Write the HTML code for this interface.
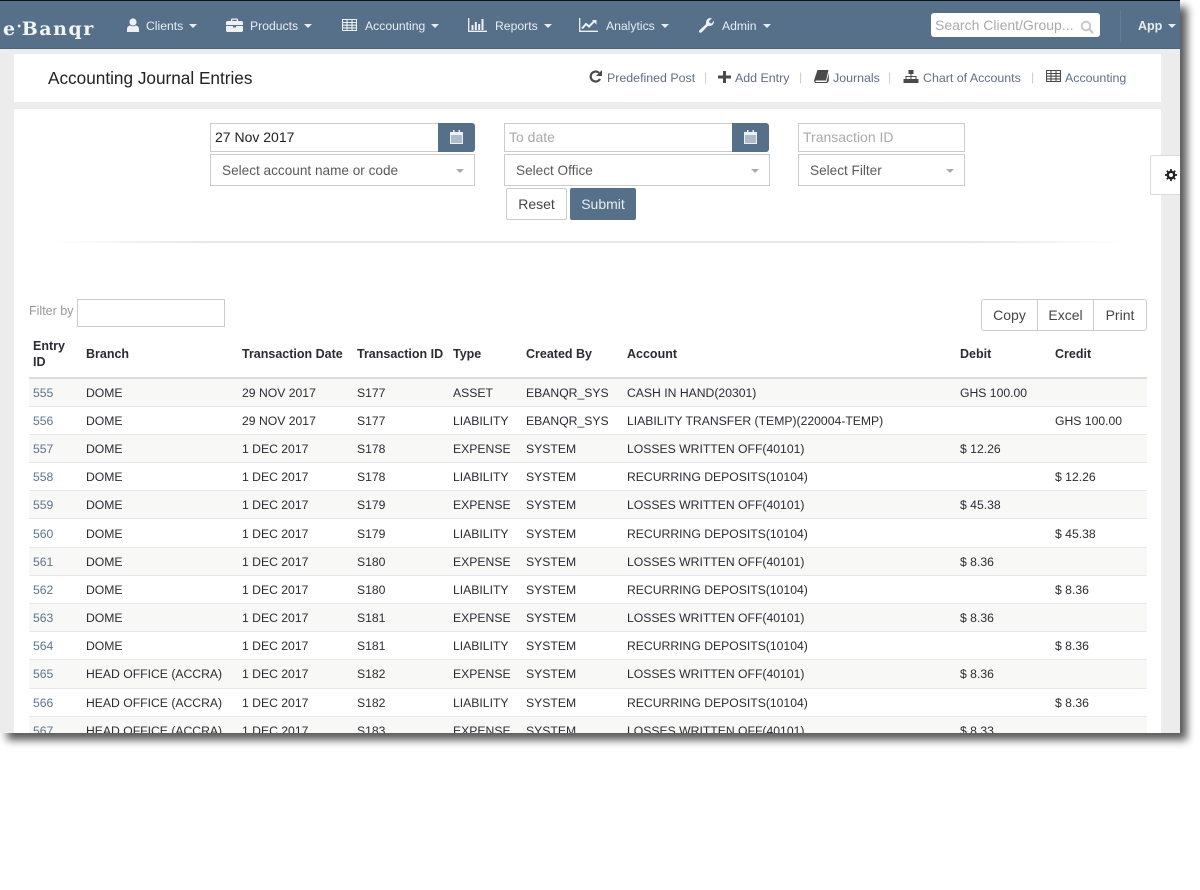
<!DOCTYPE html>
<html><head><meta charset="utf-8"><style>
*{box-sizing:border-box}
html,body{margin:0;padding:0;width:1200px;height:890px;overflow:hidden;background:#fff;font-family:"Liberation Sans",sans-serif}
#app{position:absolute;left:0;top:0;width:1180px;height:733px;background:#ececec;box-shadow:7px 7px 8px rgba(0,0,0,.65);overflow:hidden}
#nav{position:absolute;left:0;top:1px;width:1180px;height:48px;background:#56708a;border-bottom:1px solid #4d6479}
#top{position:absolute;left:0;top:0;width:1180px;height:1px;background:#111}
.a{position:absolute;white-space:nowrap}
.n{color:#e8edf2;font-size:12.2px;top:19px;line-height:14px}
.c{display:inline-block;width:0;height:0;border-left:4px solid transparent;border-right:4px solid transparent;border-top:4px solid #e8edf2;vertical-align:2px;margin-left:6px}
svg{position:absolute;display:block}
.l{color:#5d6f86;font-size:12.4px;top:71px;line-height:14px}
.s{color:#ccc;font-size:12px;top:71px;line-height:13px}
.in{border:1px solid #ccc;background:#fff;font-size:14px;line-height:26px;height:29px;padding-left:4px}
.sel{border:1px solid #ccc;background:#fff;font-size:13.6px;color:#5a5a5a;height:32px;line-height:32px;padding-left:11px}
.sel i{position:absolute;right:10px;top:14px;width:0;height:0;border-left:4px solid transparent;border-right:4px solid transparent;border-top:4px solid #aaa}
.cal{background:#56708a;border-radius:0 3px 3px 0;height:29px;width:37px}
.btn{border:1px solid #ccc;background:#fff;color:#444;font-size:14px;text-align:center;line-height:30px;height:32px}
table{position:absolute;left:29px;top:333px;width:1118px;border-collapse:collapse;table-layout:fixed;font-size:12.2px;color:#2b2b33;background:#fff}
th{font-size:12.5px;font-weight:bold;text-align:left;padding:0 4px 3px;height:45px;line-height:16px;border-bottom:2px solid #ddd;vertical-align:middle}
td{padding:1px 4px 0;height:28.2px;border-top:1px solid #e6e6ec;white-space:nowrap;overflow:visible}
tr:nth-child(odd) td{background:#f8f8f7}
tbody tr:first-child td{border-top:0}
td:first-child{color:#5d7490}
</style></head><body>
<div id="app">
<div id="top"></div>
<div id="nav"></div>
<div class="a" style="left:3px;top:15px;font:bold 19px/22px 'DejaVu Serif',serif;color:#f2f4f6;letter-spacing:1.5px">e<span style="font-size:8px;vertical-align:6px;letter-spacing:0">&#8226;</span>Banqr</div>

<svg style="left:127px;top:18px" width="12" height="15" viewBox="0 0 12 15"><circle cx="6" cy="4" r="3.6" fill="#eef1f4"/><path d="M0 14V11C0 8.5 2 7.500 3.500 7.500C4.500 8.500 7.500 8.500 8.500 7.500C10 7.500 12 8.500 12 11V14Z" fill="#eef1f4"/></svg>
<div class="a n" style="left:146px">Clients<span class="c"></span></div>
<svg style="left:226px;top:18px" width="17" height="14" viewBox="0 0 17 14"><path d="M1.500 3H5V1.500C5 .9 5.500.5 6 .5H11C11.500.5 12 .9 12 1.500V3H15.500C16.300 3 17 3.700 17 4.500V7H0V4.500C0 3.700.7 3 1.500 3ZM6.300 1.700V3H10.700V1.700ZM0 8H7V9.500H10V8H17V12.500C17 13.300 16.300 14 15.500 14H1.500C.7 14 0 13.300 0 12.500Z" fill="#eef1f4"/></svg>
<div class="a n" style="left:250px">Products<span class="c"></span></div>
<svg style="left:342px;top:19px" width="15" height="12" viewBox="0 0 15 12"><path d="M.5.5H14.500V11.500H.5ZM.5 3.500H14.500M.5 6.200H14.500M.5 8.900H14.500M5 .5V11.500M10 .5V11.500" fill="none" stroke="#eef1f4" stroke-width="1.100"/></svg>
<div class="a n" style="left:365px">Accounting<span class="c"></span></div>
<svg style="left:468px;top:18px" width="19" height="14" viewBox="0 0 19 14"><path d="M.7 0V13.300H19" fill="none" stroke="#eef1f4" stroke-width="1.300"/><path d="M3.500 7H5.500V12H3.500ZM6.800 4H8.800V12H6.800ZM10.200 6H12.200V12H10.200ZM13.500 1H15.500V12H13.500Z" fill="#eef1f4"/></svg>
<div class="a n" style="left:495px">Reports<span class="c"></span></div>
<svg style="left:579px;top:18px" width="19" height="14" viewBox="0 0 19 14"><path d="M.7 0V13.300H19" fill="none" stroke="#eef1f4" stroke-width="1.300"/><path d="M3 10.500L7 6L10 8.500L15.500 3" fill="none" stroke="#eef1f4" stroke-width="2"/><path d="M13 2H17.500V6.500Z" fill="#eef1f4"/></svg>
<div class="a n" style="left:606px">Analytics<span class="c"></span></div>
<svg style="left:699px;top:18px" width="15" height="15" viewBox="0 0 15 15"><path d="M15 3.500C15 6 13 8 10.500 8C10 8 9.500 7.900 9 7.700L3 14C2 15 .9 15 .3 14.300C-.2 13.700-.1 12.800.8 12L7.200 6C7 5.500 7 5 7 4.500C7 2 9 0 11.500 0C12 0 12.500.1 13 .3L10 3L10.700 5L12.700 5.500L14.800 2.600C15 3 15 3.200 15 3.500Z" fill="#eef1f4"/></svg>
<div class="a n" style="left:722px">Admin<span class="c"></span></div>

<div class="a" style="left:931px;top:13px;width:169px;height:24px;background:#fff;border-radius:3px;color:#aaa;font-size:14px;line-height:24px;padding-left:4px">Search Client/Group...</div>
<svg style="left:1080px;top:20px" width="14" height="14" viewBox="0 0 14 14"><circle cx="6" cy="6" r="4.300" fill="none" stroke="#c4c4c4" stroke-width="1.800"/><path d="M9.200 9.200L13 13" stroke="#c4c4c4" stroke-width="2"/></svg>
<div class="a" style="left:1120px;top:10px;width:1px;height:32px;background:#647c94"></div>
<div class="a n" style="left:1138px;font-weight:bold;font-size:12.5px">App<span class="c" style="margin-left:6px"></span></div>

<div class="a" style="left:14px;top:54px;width:1147px;height:48px;background:#fff"></div>
<div class="a" style="left:48px;top:68px;font-size:17.2px;line-height:20px;color:#222">Accounting Journal Entries</div>

<svg style="left:589px;top:70px" width="13" height="13" viewBox="0 0 13 13"><path d="M11 9A5 5 0 1 1 10 2.800" fill="none" stroke="#4a4a4a" stroke-width="2.200"/><path d="M13 0V6H7Z" fill="#4a4a4a"/></svg>
<div class="a l" style="left:607px">Predefined Post</div>
<div class="a s" style="left:704px">|</div>
<svg style="left:718px;top:71px" width="13" height="12" viewBox="0 0 13 12"><path d="M5 0H8V4.500H13V7.500H8V12H5V7.500H0V4.500H5Z" fill="#4a4a4a"/></svg>
<div class="a l" style="left:735px">Add Entry</div>
<div class="a s" style="left:799px">|</div>
<svg style="left:814px;top:70px" width="15" height="13" viewBox="0 0 15 13"><path d="M3.500 0H14.500L12 10.500H2C1.200 10.500 1.300 12 2.200 12H12.500L14.800 3V11L13 13H2C.5 13 -.3 11.500 .3 9.500Z" fill="#4a4a4a"/></svg>
<div class="a l" style="left:833px">Journals</div>
<div class="a s" style="left:888px">|</div>
<svg style="left:903px;top:70px" width="16" height="13" viewBox="0 0 16 13"><path d="M5.500 0H10.500V4H8.500V6H13.500V9H15.500V13H10V9H12.500V7H8.500V9H10V13H6V9H7.500V7H3.500V9H6V13H.5V9H2.500V6H7.500V4H5.500Z" fill="#4a4a4a"/></svg>
<div class="a l" style="left:923px">Chart of Accounts</div>
<div class="a s" style="left:1031px">|</div>
<svg style="left:1046px;top:70px" width="15" height="12" viewBox="0 0 15 12"><path d="M.5.5H14.500V11.500H.5ZM.5 3.500H14.500M.5 6.200H14.500M.5 8.900H14.500M5 .5V11.500M10 .5V11.500" fill="none" stroke="#4a4a4a" stroke-width="1.100"/></svg>
<div class="a l" style="left:1065px">Accounting</div>

<div class="a" style="left:14px;top:109px;width:1147px;height:630px;background:#fff;border-radius:2px"></div>

<div class="a in" style="left:210px;top:123px;width:229px;color:#222">27 Nov 2017</div>
<div class="a cal" style="left:438px;top:123px"></div>
<svg style="left:450px;top:130px" width="13" height="14" viewBox="0 0 13 14"><path d="M0 2H13V14H0Z" fill="#eef1f4"/><path d="M1 5H12V13H1Z" fill="#aebbc8"/><path d="M3 0H4.500V3H3ZM8.500 0H10V3H8.500Z" fill="#eef1f4"/></svg>
<div class="a sel" style="left:210px;top:154px;width:265px">Select account name or code<i></i></div>

<div class="a in" style="left:504px;top:123px;width:229px;color:#aaa">To date</div>
<div class="a cal" style="left:732px;top:123px"></div>
<svg style="left:744px;top:130px" width="13" height="14" viewBox="0 0 13 14"><path d="M0 2H13V14H0Z" fill="#eef1f4"/><path d="M1 5H12V13H1Z" fill="#aebbc8"/><path d="M3 0H4.500V3H3ZM8.500 0H10V3H8.500Z" fill="#eef1f4"/></svg>
<div class="a sel" style="left:504px;top:154px;width:266px">Select Office<i></i></div>

<div class="a in" style="left:798px;top:123px;width:167px;color:#aaa">Transaction ID</div>
<div class="a sel" style="left:798px;top:154px;width:167px">Select Filter<i></i></div>

<div class="a btn" style="left:506px;top:188px;width:61px;border-radius:2px">Reset</div>
<div class="a btn" style="left:570px;top:188px;width:66px;background:#56708a;border-color:#56708a;color:#e8edf2;border-radius:2px">Submit</div>

<div class="a" style="left:50px;top:241px;width:1075px;height:2px;background:linear-gradient(90deg,#fff,#e6e6e6 15%,#e6e6e6 85%,#fff)"></div>

<div class="a" style="left:29px;top:304px;font-size:12.5px;line-height:15px;color:#999">Filter by</div>
<div class="a" style="left:77px;top:299px;width:148px;height:28px;border:1px solid #ccc;background:#fff"></div>

<div class="a btn" style="left:981px;top:299px;width:57px;border-radius:3px 0 0 3px">Copy</div>
<div class="a btn" style="left:1037px;top:299px;width:57px;border-radius:0">Excel</div>
<div class="a btn" style="left:1093px;top:299px;width:54px;border-radius:0 3px 3px 0">Print</div>

<table>
<colgroup><col style="width:53px"><col style="width:156px"><col style="width:115px"><col style="width:96px"><col style="width:73px"><col style="width:101px"><col style="width:333px"><col style="width:95px"><col style="width:96px"></colgroup>
<thead><tr><th>Entry<br>ID</th><th>Branch</th><th>Transaction Date</th><th>Transaction ID</th><th>Type</th><th>Created By</th><th>Account</th><th>Debit</th><th>Credit</th></tr></thead>
<tbody>
<tr><td>555</td><td>DOME</td><td>29 NOV 2017</td><td>S177</td><td>ASSET</td><td>EBANQR_SYS</td><td>CASH IN HAND(20301)</td><td>GHS 100.00</td><td></td></tr>
<tr><td>556</td><td>DOME</td><td>29 NOV 2017</td><td>S177</td><td>LIABILITY</td><td>EBANQR_SYS</td><td>LIABILITY TRANSFER (TEMP)(220004-TEMP)</td><td></td><td>GHS 100.00</td></tr>
<tr><td>557</td><td>DOME</td><td>1 DEC 2017</td><td>S178</td><td>EXPENSE</td><td>SYSTEM</td><td>LOSSES WRITTEN OFF(40101)</td><td>$ 12.26</td><td></td></tr>
<tr><td>558</td><td>DOME</td><td>1 DEC 2017</td><td>S178</td><td>LIABILITY</td><td>SYSTEM</td><td>RECURRING DEPOSITS(10104)</td><td></td><td>$ 12.26</td></tr>
<tr><td>559</td><td>DOME</td><td>1 DEC 2017</td><td>S179</td><td>EXPENSE</td><td>SYSTEM</td><td>LOSSES WRITTEN OFF(40101)</td><td>$ 45.38</td><td></td></tr>
<tr><td>560</td><td>DOME</td><td>1 DEC 2017</td><td>S179</td><td>LIABILITY</td><td>SYSTEM</td><td>RECURRING DEPOSITS(10104)</td><td></td><td>$ 45.38</td></tr>
<tr><td>561</td><td>DOME</td><td>1 DEC 2017</td><td>S180</td><td>EXPENSE</td><td>SYSTEM</td><td>LOSSES WRITTEN OFF(40101)</td><td>$ 8.36</td><td></td></tr>
<tr><td>562</td><td>DOME</td><td>1 DEC 2017</td><td>S180</td><td>LIABILITY</td><td>SYSTEM</td><td>RECURRING DEPOSITS(10104)</td><td></td><td>$ 8.36</td></tr>
<tr><td>563</td><td>DOME</td><td>1 DEC 2017</td><td>S181</td><td>EXPENSE</td><td>SYSTEM</td><td>LOSSES WRITTEN OFF(40101)</td><td>$ 8.36</td><td></td></tr>
<tr><td>564</td><td>DOME</td><td>1 DEC 2017</td><td>S181</td><td>LIABILITY</td><td>SYSTEM</td><td>RECURRING DEPOSITS(10104)</td><td></td><td>$ 8.36</td></tr>
<tr><td>565</td><td>HEAD OFFICE (ACCRA)</td><td>1 DEC 2017</td><td>S182</td><td>EXPENSE</td><td>SYSTEM</td><td>LOSSES WRITTEN OFF(40101)</td><td>$ 8.36</td><td></td></tr>
<tr><td>566</td><td>HEAD OFFICE (ACCRA)</td><td>1 DEC 2017</td><td>S182</td><td>LIABILITY</td><td>SYSTEM</td><td>RECURRING DEPOSITS(10104)</td><td></td><td>$ 8.36</td></tr>
<tr><td>567</td><td>HEAD OFFICE (ACCRA)</td><td>1 DEC 2017</td><td>S183</td><td>EXPENSE</td><td>SYSTEM</td><td>LOSSES WRITTEN OFF(40101)</td><td>$ 8.33</td><td></td></tr>
</tbody></table>

<div class="a" style="left:1150px;top:155px;width:34px;height:40px;background:#fff;border:1px solid #ddd;border-radius:2px 0 0 2px"></div>
<svg style="left:1165px;top:169px" width="12" height="12" viewBox="0 0 12 12"><circle cx="6" cy="6" r="3.200" fill="none" stroke="#222" stroke-width="2.400"/><path d="M6 0V12M0 6H12M1.800 1.800L10.200 10.200M10.200 1.800L1.800 10.200" stroke="#222" stroke-width="1.800" stroke-dasharray="2 8 2 0"/></svg>
</div>
</body></html>
